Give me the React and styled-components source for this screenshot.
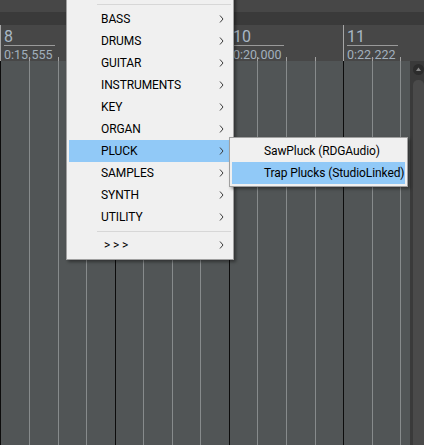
import React from 'react';
import styled, { createGlobalStyle } from 'styled-components';

const Global = createGlobalStyle`
  html, body { margin: 0; padding: 0; background: #474747; overflow: hidden; }
  body { font-family: Roboto, "Noto Sans", sans-serif; }
`;

const Screen = styled.div`
  position: relative;
  width: 424px;
  height: 445px;
  overflow: hidden;
  display: flex;
  flex-direction: column;
  background: #474747;
`;

const TopBar = styled.div`
  height: 12px;
  flex: none;
  background: #474747;
`;

const Band = styled.div`
  height: 13px;
  flex: none;
  background: #3a3a3a;
`;

const Ruler = styled.div`
  height: 36px;
  flex: none;
  display: flex;
  background: #474747;
  overflow: hidden;
`;

const RulerBar = styled.div`
  box-sizing: border-box;
  width: ${(p) => (p.$w ? `${p.$w}px` : 'auto')};
  flex: ${(p) => (p.$w ? 'none' : '1')};
  min-width: 0;
  border-left: 1px solid #a6a6a6;
  display: flex;
  flex-direction: column;
  padding-top: 4px;
`;

const Label = styled.div`
  margin-left: 3px;
  width: 51px;
  height: 32px;
  color: #a9b7c5;
`;

const BarNum = styled.div`
  font-size: 16px;
  line-height: 16px;
  height: 16px;
  border-bottom: 1px solid #9a9a9a;
`;

const TimeText = styled.div`
  margin-top: 2px;
  font-size: 12.5px;
  line-height: 13px;
  white-space: nowrap;
  color: #a2b0bd;
`;

const TickRow = styled.div`
  display: flex;
  height: 4px;
  margin-top: -4px;
`;

const Tick = styled.div`
  box-sizing: border-box;
  width: ${(p) => (p.$w ? `${p.$w}px` : 'auto')};
  flex: ${(p) => (p.$w ? 'none' : '1')};
  border-left: ${(p) => (p.$first ? 'none' : '1px solid #a0a0a0')};
`;

const Body = styled.div`
  flex: 1;
  display: flex;
  min-height: 0;
`;

const Grid = styled.div`
  flex: 1;
  display: flex;
  background: #515556;
`;

const Beat = styled.div`
  box-sizing: border-box;
  width: ${(p) => p.$w}px;
  flex: none;
  border-left: 1px solid ${(p) => (p.$bar ? '#0c0c0c' : '#878b8c')};
`;

const Gutter = styled.div`
  width: 14px;
  flex: none;
  box-sizing: border-box;
  background: #3a3a3a;
  padding: 3px 0 0 3px;
  display: flex;
  flex-direction: column;
`;

const UpButton = styled.div`
  width: 11px;
  height: 11px;
  flex: none;
  display: flex;
`;

const Thumb = styled.div`
  margin-top: 5px;
  flex: 1;
  background: #4a4a4a;
  border-radius: 5px 5px 0 0;
`;

const Popup = styled.div`
  position: absolute;
  box-sizing: border-box;
  background: #f0f0f0;
  border: 1px solid #a0a0a0;
  box-shadow: 2px 2px 3px rgba(0, 0, 0, 0.4);
  font-family: Roboto, "Noto Sans", sans-serif;
  font-size: 12px;
  letter-spacing: -0.1px;
  color: #000;
  padding: 2px;
`;

const MainMenu = styled(Popup)`
  left: 66px;
  top: -10px;
  width: 168px;
  padding-bottom: 3px;
`;

const SubMenu = styled(Popup)`
  left: 229px;
  top: 137px;
  width: 179px;
`;

const Separator = styled.div`
  height: 1px;
  background: #d7d7d7;
  margin: ${(p) => p.$top}px 0 ${(p) => p.$bottom}px 28px;
`;

const Item = styled.div`
  height: 22px;
  line-height: 22px;
  display: flex;
  align-items: center;
  padding: 0 7px 0 32px;
  white-space: nowrap;
  background: ${(p) => (p.$active ? '#91c9f7' : 'transparent')};
`;

const ItemLabel = styled.span`
  flex: 1;
`;

const Chevron = () => (
  <svg width="5" height="8" viewBox="0 0 5 8">
    <path d="M1 0.5 L4 4 L1 7.5" stroke="#3c3c3c" strokeWidth="1" fill="none" />
  </svg>
);

const rulerBars = [
  { id: 8, num: '8', time: '0:15.555', w: 115, ticks: [29, 58, 86] },
  { id: 9, num: '', time: '', w: 114, ticks: [28, 57, 85] },
  { id: 10, num: '10', time: '0:20.000', w: 114, ticks: [28, 57, 86] },
  { id: 11, num: '11', time: '0:22.222', w: 0, ticks: [29, 57] },
];

const beatWidths = [29, 29, 28, 29, 28, 29, 28, 29, 28, 29, 29, 28, 29, 28, 10];

const categories = [
  'BASS', 'DRUMS', 'GUITAR', 'INSTRUMENTS', 'KEY', 'ORGAN',
  'PLUCK', 'SAMPLES', 'SYNTH', 'UTILITY',
];

function RulerSegment({ bar }) {
  const cells = bar.ticks.map((o, i) => (i === 0 ? o - 1 : o - bar.ticks[i - 1]));
  return (
    <RulerBar $w={bar.w}>
      <Label>
        {bar.num && (
          <>
            <BarNum>{bar.num}</BarNum>
            <TimeText>{bar.time}</TimeText>
          </>
        )}
      </Label>
      <TickRow>
        {cells.map((w, i) => (
          <Tick key={i} $w={w} $first={i === 0} />
        ))}
        <Tick />
      </TickRow>
    </RulerBar>
  );
}

export default function App() {
  return (
    <Screen>
      <Global />
      <TopBar />
      <Band />
      <Ruler>
        {rulerBars.map((b) => (
          <RulerSegment key={b.id} bar={b} />
        ))}
      </Ruler>
      <Body>
        <Grid>
          {beatWidths.map((w, i) => (
            <Beat key={i} $w={w} $bar={i % 4 === 0} />
          ))}
        </Grid>
        <Gutter>
          <UpButton>
            <svg width="11" height="11" viewBox="0 0 11 11">
              <circle cx="5.5" cy="5.5" r="5.5" fill="#2c2c2c" />
              <path d="M3 7 L5.5 3.6 L8 7 Z" fill="#8a8a8a" />
            </svg>
          </UpButton>
          <Thumb />
        </Gutter>
      </Body>

      <MainMenu>
        <Separator $top={11} $bottom={3} />
        {categories.map((c) => (
          <Item key={c} $active={c === 'PLUCK'}>
            <ItemLabel>{c}</ItemLabel>
            <Chevron />
          </Item>
        ))}
        <Separator $top={3} $bottom={2} />
        <Item>
          <ItemLabel>{'\u00a0> > >'}</ItemLabel>
          <Chevron />
        </Item>
      </MainMenu>

      <SubMenu>
        <Item>
          <ItemLabel>SawPluck (RDGAudio)</ItemLabel>
        </Item>
        <Item $active>
          <ItemLabel>Trap Plucks (StudioLinked)</ItemLabel>
        </Item>
      </SubMenu>
    </Screen>
  );
}
